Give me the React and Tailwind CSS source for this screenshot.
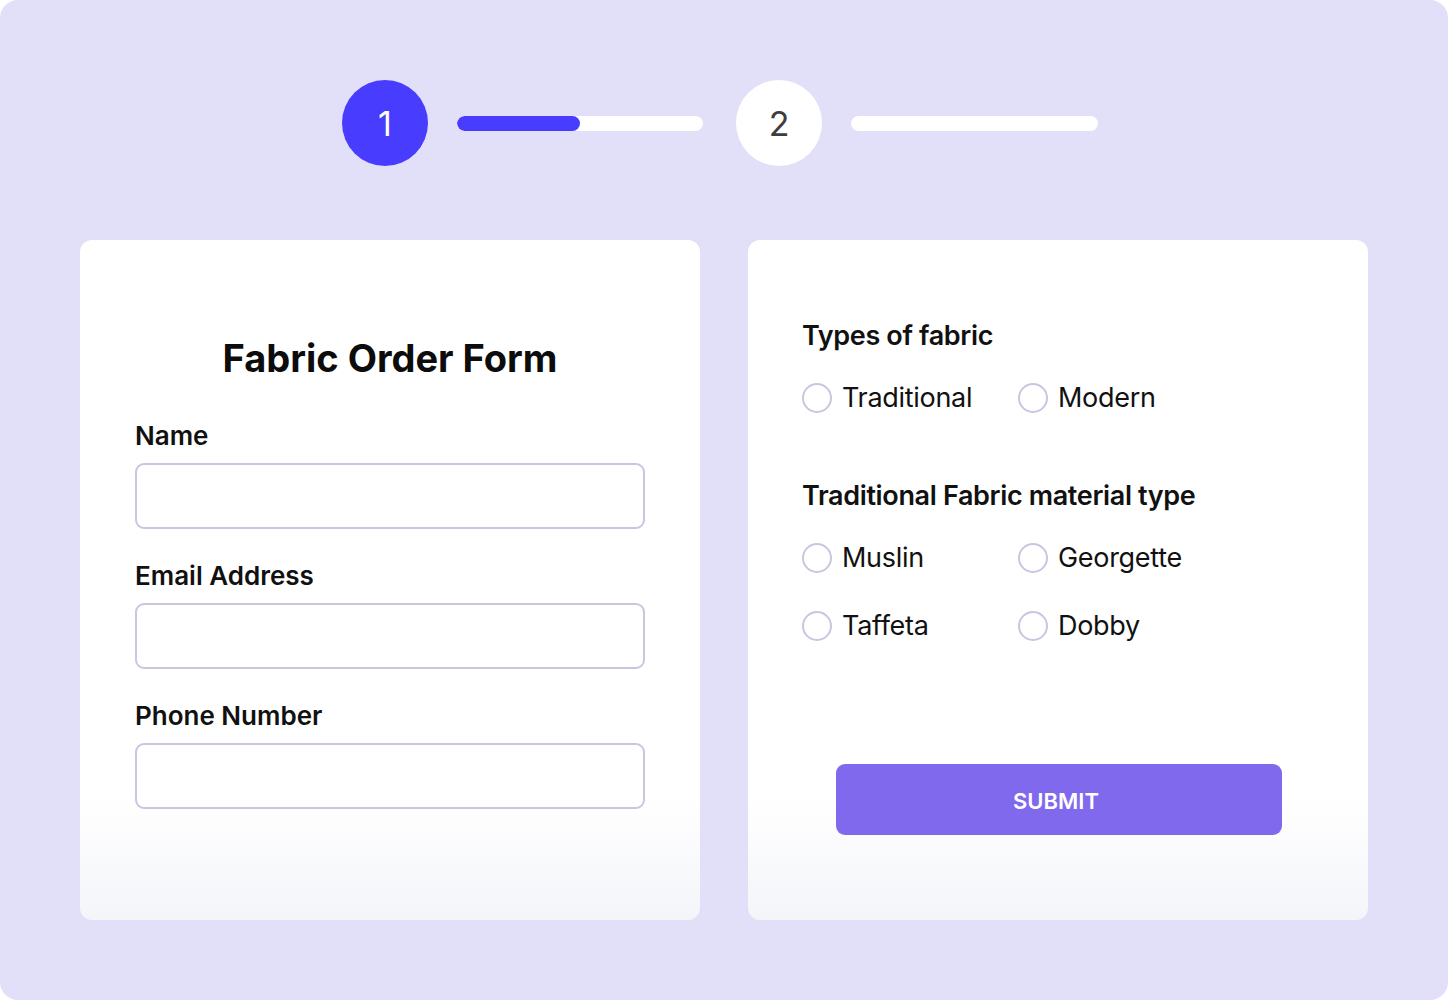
import React from "react";

const font = { fontFamily: "Inter, 'Noto Sans', sans-serif" };

function Radio({ label }) {
  return (
    <label className="flex items-center h-[34px] gap-[10px] cursor-pointer">
      <span className="w-[30px] h-[30px] rounded-full border-2 border-[#c8c6e0] bg-white shrink-0" />
      <span className="text-[27px] leading-[34px] text-[#111] tracking-[-0.3px]">{label}</span>
    </label>
  );
}

function Field({ label, first }) {
  return (
    <div className={first ? "" : "mt-[31px]"}>
      <div className="text-[26px] leading-[32px] font-semibold text-[#111]">{label}</div>
      <input
        type="text"
        className="mt-[11px] block w-full h-[66px] rounded-[9px] border-2 border-[#c8c6e0] bg-white outline-none px-4"
      />
    </div>
  );
}

export default function App() {
  return (
    <div className="w-[1448px] h-[1000px] bg-white" style={font}>
      <div className="w-full h-full rounded-[18px] bg-[#e2e0f8] flex flex-col">
        {/* stepper */}
        <div className="flex items-center pt-[80px] pl-[342px]">
          <div className="w-[86px] h-[86px] rounded-full bg-[#483dff] text-white flex items-center justify-center text-[34px]">
            1
          </div>
          <div className="ml-[29px] w-[246px] h-[15px] rounded-full bg-white overflow-hidden">
            <div className="w-[123px] h-full rounded-full bg-[#483dff]" />
          </div>
          <div className="ml-[33px] w-[86px] h-[86px] rounded-full bg-white text-[#3d3d3d] flex items-center justify-center text-[34px]">
            2
          </div>
          <div className="ml-[29px] w-[247px] h-[15px] rounded-full bg-white" />
        </div>

        {/* cards */}
        <div className="flex gap-[48px] px-[80px] mt-[74px]">
          <div className="w-[620px] h-[680px] rounded-[12px] bg-[linear-gradient(to_bottom,#ffffff_82%,#f4f5f9)] px-[55px] pt-[95px]">
            <h1 className="text-center text-[38px] leading-[46px] font-bold text-[#0c0c0c] mb-[39px]">
              Fabric Order Form
            </h1>
            <Field label="Name" first />
            <Field label="Email Address" />
            <Field label="Phone Number" />
          </div>

          <div className="w-[620px] h-[680px] rounded-[12px] bg-[linear-gradient(to_bottom,#ffffff_82%,#f4f5f9)] pl-[54px] pt-[79px] flex flex-col">
            <div className="text-[27px] leading-[34px] font-semibold text-[#111] tracking-[-0.35px]">Types of fabric</div>
            <div className="mt-[28px] grid grid-cols-[216px_1fr]">
              <Radio label="Traditional" />
              <Radio label="Modern" />
            </div>
            <div className="mt-[64px] text-[27px] leading-[34px] font-semibold text-[#111] tracking-[-0.35px]">
              Traditional Fabric material type
            </div>
            <div className="mt-[28px] grid grid-cols-[216px_1fr] gap-y-[34px]">
              <Radio label="Muslin" />
              <Radio label="Georgette" />
              <Radio label="Taffeta" />
              <Radio label="Dobby" />
            </div>
            <button className="mt-[121px] ml-[34px] w-[446px] h-[71px] rounded-[9px] bg-[#8169ed] text-white text-[22px] font-semibold pt-[3px] pr-[6px]">
              SUBMIT
            </button>
          </div>
        </div>
      </div>
    </div>
  );
}
